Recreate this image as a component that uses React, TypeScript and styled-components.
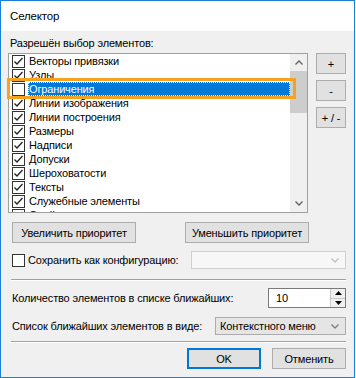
import React from 'react';
import styled, { createGlobalStyle } from 'styled-components';

const GlobalStyle = createGlobalStyle`
  html, body {
    margin: 0;
    padding: 0;
    background: #ffffff;
  }
  body {
    font-family: "Liberation Sans", Arial, sans-serif;
    font-size: 11px;
    letter-spacing: -0.15px;
    color: #000000;
  }
`;

const Window = styled.div`
  position: relative;
  box-sizing: border-box;
  width: 355px;
  height: 378px;
  border: 1px solid #1a7fd6;
  background: #f0f0f0;
  display: flex;
  flex-direction: column;
`;

const TitleBar = styled.div`
  height: 30px;
  background: #ffffff;
  display: flex;
  align-items: center;
  padding-left: 9px;
  font-size: 11.5px;
`;

const Body = styled.div`
  flex: 1;
  padding: 5px 8px 0 7px;
  display: flex;
  flex-direction: column;
`;

const Label = styled.div`
  height: 15px;
  line-height: 15px;
  padding-left: 2px;
  white-space: nowrap;
`;

const ListRow = styled.div`
  margin-top: 2px;
  display: flex;
  gap: 8px;
`;

const ListBox = styled.div`
  position: relative;
  box-sizing: border-box;
  width: 300px;
  height: 160px;
  border: 1px solid #a0a0a0;
  background: #ffffff;
  display: flex;
`;

const Items = styled.div`
  flex: 1;
  overflow: hidden;
`;

const Item = styled.div`
  height: 14px;
  display: flex;
  align-items: flex-start;
  padding-left: 3px;
`;

const Box = styled.span`
  box-sizing: border-box;
  flex: none;
  width: 13px;
  height: 13px;
  margin-top: 1px;
  border: 1px solid #333333;
  background: #ffffff;
  display: flex;
  align-items: center;
  justify-content: center;
`;

const ItemText = styled.span<{ $selected?: boolean }>`
  flex: 1;
  margin-left: 3px;
  height: 14px;
  line-height: 15px;
  padding-left: 1px;
  white-space: nowrap;
  box-sizing: border-box;
  background: ${(p) => (p.$selected ? '#0078d7' : 'transparent')};
  color: ${(p) => (p.$selected ? '#ffffff' : '#000000')};
  outline: ${(p) => (p.$selected ? '1px dotted #ffffff' : 'none')};
  outline-offset: -1px;
`;

const ScrollBar = styled.div`
  width: 17px;
  flex: none;
  background: #f0f0f0;
  display: flex;
  flex-direction: column;
`;

const ScrollArrow = styled.div`
  height: 17px;
  display: flex;
  align-items: center;
  justify-content: center;
`;

const ScrollTrack = styled.div`
  flex: 1;
`;

const Thumb = styled.div`
  height: 42px;
  background: #cdcdcd;
`;

const Highlight = styled.div`
  position: absolute;
  left: -2px;
  top: 24px;
  width: 289px;
  height: 21px;
  box-sizing: border-box;
  border: 3px solid #f6a21e;
  pointer-events: none;
`;

const SideButtons = styled.div`
  display: flex;
  flex-direction: column;
  gap: 6px;
`;

const Button = styled.button<{ $w: number; $default?: boolean }>`
  box-sizing: border-box;
  width: ${(p) => p.$w}px;
  height: 21px;
  padding: 0;
  margin: 0;
  font-family: inherit;
  font-size: 11px;
  letter-spacing: -0.15px;
  color: #000000;
  background: #e1e1e1;
  border: ${(p) => (p.$default ? '2px solid #0078d7' : '1px solid #adadad')};
  white-space: nowrap;
`;

const PriorityRow = styled.div`
  margin-top: 9px;
  display: flex;
  gap: 49px;
  padding-left: 4px;
`;

const SaveRow = styled.div`
  margin-top: 8px;
  height: 18px;
  display: flex;
  align-items: center;
  padding-left: 4px;
`;

const SaveText = styled.span`
  margin-left: 3px;
  flex: 1;
  white-space: nowrap;
`;

const Combo = styled.div<{ $w: number; $disabled?: boolean }>`
  box-sizing: border-box;
  width: ${(p) => p.$w}px;
  height: 18px;
  display: flex;
  align-items: center;
  justify-content: space-between;
  padding: 0 6px 0 4px;
  background: ${(p) => (p.$disabled ? '#f7f7f7' : '#e5e5e5')};
  border: 1px solid ${(p) => (p.$disabled ? '#d0d0d0' : '#acacac')};
  white-space: nowrap;
`;

const Separator = styled.div<{ $top: number }>`
  margin: ${(p) => p.$top}px 0 0 3px;
  height: 1px;
  background: #a0a0a0;
  border-bottom: 1px solid #ffffff;
`;

const FieldRow = styled.div<{ $top: number; $h: number }>`
  margin-top: ${(p) => p.$top}px;
  height: ${(p) => p.$h}px;
  display: flex;
  align-items: center;
  justify-content: space-between;
  padding-left: 4px;
  white-space: nowrap;
`;

const Spin = styled.div`
  box-sizing: border-box;
  width: 78px;
  height: 20px;
  border: 1px solid #7a7a7a;
  background: #ffffff;
  display: flex;
`;

const SpinValue = styled.span`
  flex: 1;
  padding-left: 7px;
  line-height: 19px;
`;

const SpinButtons = styled.div`
  width: 14px;
  display: flex;
  flex-direction: column;
  border-left: 1px solid #c8c8c8;
`;

const SpinButton = styled.div`
  flex: 1;
  display: flex;
  align-items: center;
  justify-content: center;
  background: #f0f0f0;
  & + & {
    border-top: 1px solid #c8c8c8;
  }
`;

const Footer = styled.div`
  margin-top: 5px;
  display: flex;
  justify-content: flex-end;
  gap: 11px;
`;

const Check = () => (
  <svg width="11" height="11" viewBox="0 0 11 11">
    <path d="M1.5 5.5 L4 8 L9.5 2" stroke="#222" strokeWidth="1.3" fill="none" />
  </svg>
);

const Chevron = ({ up, color = '#606060' }: { up?: boolean; color?: string }) => (
  <svg width="8" height="5" viewBox="0 0 8 5">
    <path
      d={up ? 'M0.5 4.5 L4 1 L7.5 4.5' : 'M0.5 0.5 L4 4 L7.5 0.5'}
      stroke={color}
      strokeWidth="1.3"
      fill="none"
    />
  </svg>
);

const Triangle = ({ up }: { up?: boolean }) => (
  <svg width="7" height="4" viewBox="0 0 7 4">
    <path d={up ? 'M0 4 L3.5 0 L7 4 Z' : 'M0 0 L3.5 4 L7 0 Z'} fill="#000" />
  </svg>
);

const items = [
  { name: 'Векторы привязки', checked: true },
  { name: 'Узлы', checked: true },
  { name: 'Ограничения', checked: false, selected: true },
  { name: 'Линии изображения', checked: true },
  { name: 'Линии построения', checked: true },
  { name: 'Размеры', checked: true },
  { name: 'Надписи', checked: true },
  { name: 'Допуски', checked: true },
  { name: 'Шероховатости', checked: true },
  { name: 'Тексты', checked: true },
  { name: 'Служебные элементы', checked: true },
  { name: 'Слой', checked: true },
];

const App = () => (
  <>
    <GlobalStyle />
    <Window>
      <TitleBar>Селектор</TitleBar>
      <Body>
        <Label>Разрешён выбор элементов:</Label>
        <ListRow>
          <ListBox>
            <Items>
              {items.map((it) => (
                <Item key={it.name}>
                  <Box>{it.checked && <Check />}</Box>
                  <ItemText $selected={it.selected}>{it.name}</ItemText>
                </Item>
              ))}
            </Items>
            <ScrollBar>
              <ScrollArrow>
                <Chevron up />
              </ScrollArrow>
              <ScrollTrack>
                <Thumb />
              </ScrollTrack>
              <ScrollArrow>
                <Chevron />
              </ScrollArrow>
            </ScrollBar>
            <Highlight />
          </ListBox>
          <SideButtons>
            <Button $w={30}>+</Button>
            <Button $w={30}>-</Button>
            <Button $w={30}>+ / -</Button>
          </SideButtons>
        </ListRow>
        <PriorityRow>
          <Button $w={124}>Увеличить приоритет</Button>
          <Button $w={124}>Уменьшить приоритет</Button>
        </PriorityRow>
        <SaveRow>
          <Box />
          <SaveText>Сохранить как конфигурацию:</SaveText>
          <Combo $w={155} $disabled>
            <span />
            <Chevron color="#c0c0c0" />
          </Combo>
        </SaveRow>
        <Separator $top={10} />
        <FieldRow $top={7} $h={20}>
          <span>Количество элементов в списке ближайших:</span>
          <Spin>
            <SpinValue>10</SpinValue>
            <SpinButtons>
              <SpinButton>
                <Triangle up />
              </SpinButton>
              <SpinButton>
                <Triangle />
              </SpinButton>
            </SpinButtons>
          </Spin>
        </FieldRow>
        <FieldRow $top={9} $h={18}>
          <span>Список ближайших элементов в виде:</span>
          <Combo $w={131}>
            <span>Контекстного меню</span>
            <Chevron color="#808080" />
          </Combo>
        </FieldRow>
        <Separator $top={6} />
        <Footer>
          <Button $w={74} $default>
            OK
          </Button>
          <Button $w={74}>Отменить</Button>
        </Footer>
      </Body>
    </Window>
  </>
);

export default App;
